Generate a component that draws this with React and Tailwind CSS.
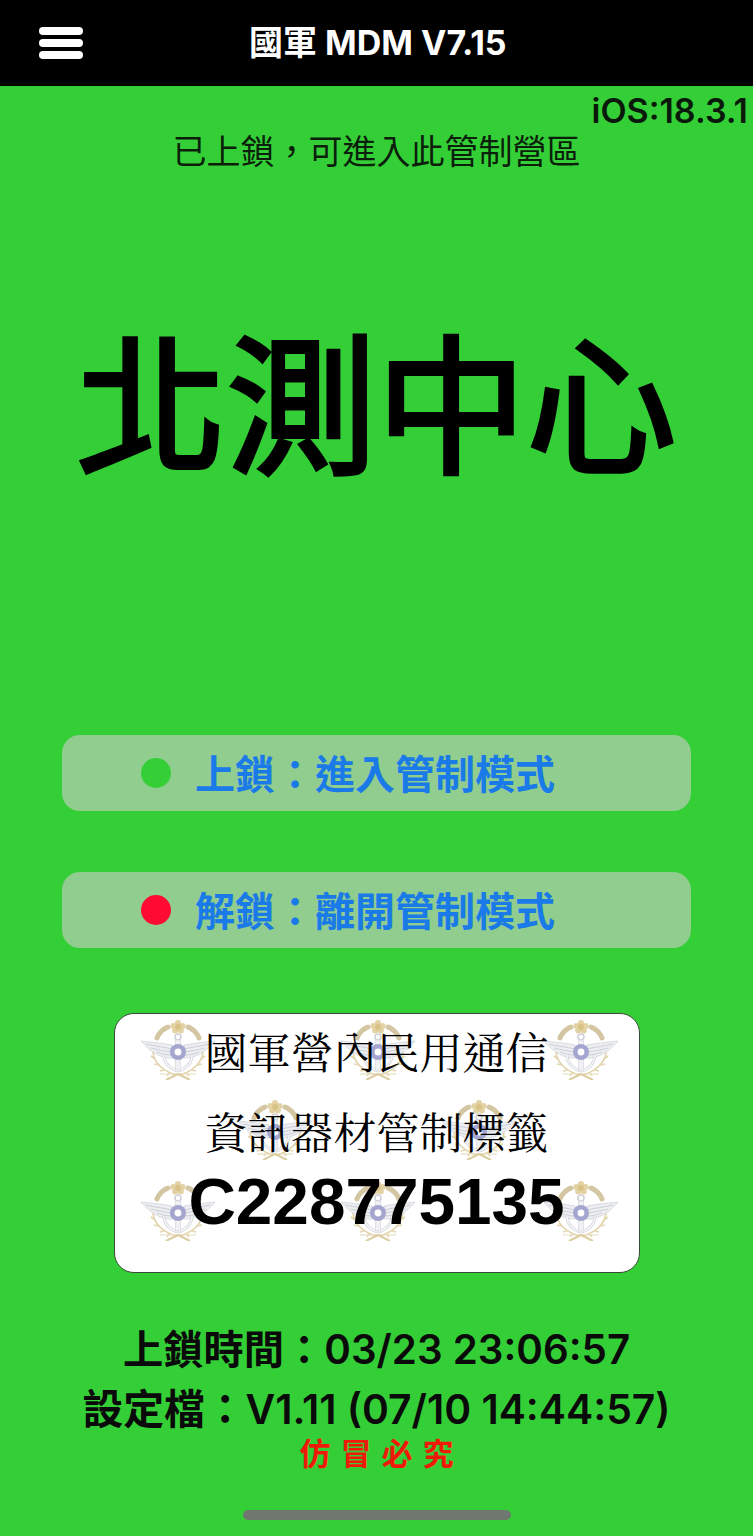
const CJK = "font-['Inter','Noto_Sans_CJK_TC',sans-serif]";

function EmblemHalf() {
  return (
    <g>
      {/* wheat at the top */}
      <path d="M17 19 C19 14 23 10 28 8" fill="none" stroke="#d4c6a2" strokeWidth="5" strokeLinecap="round" strokeDasharray="2 1" />
      {/* laurel */}
      <path d="M13 33 C14 44 24 53 37 56" fill="none" stroke="#e0d2a8" strokeWidth="1.6" />
      <path d="M15 40 L11 37 M19 46 L14 45 M24 51 L20 52 M29 54 L27 57" stroke="#e3d6b0" strokeWidth="1.6" />
      <path d="M20 55 H38" stroke="#e6dcc0" strokeWidth="1.2" />
      <path d="M26 61 L38 55" stroke="#dccd9e" strokeWidth="2" />
      {/* wing */}
      <path d="M1 22 C10 23 22 24 32 26 L32 39 C22 40 10 33 1 22Z" fill="#eceef1" stroke="#cdd0d6" strokeWidth="0.7" />
      <path d="M6 25 C14 27 24 28 32 30 M11 29 C18 31 25 32 32 33 M17 33 C22 35 27 36 32 36" fill="none" stroke="#c4c7ce" strokeWidth="0.8" />
      {/* anchor fluke */}
      <path d="M24 36 C24 44 30 50 38 52" fill="none" stroke="#d3d5db" strokeWidth="3" />
      <path d="M24 36 C24 44 30 50 38 52" fill="none" stroke="#f8f8fa" strokeWidth="1.4" />
    </g>
  );
}

function Emblem({ className }) {
  return (
    <svg viewBox="0 0 76 60" className={className}>
      <g transform="translate(0 -1)">
        <EmblemHalf />
        <g transform="matrix(-1 0 0 1 76 0)">
          <EmblemHalf />
        </g>
        {/* plum flower */}
        <circle cx="38" cy="4" r="3" fill="#e3d2a4" />
        <circle cx="33.4" cy="7" r="3" fill="#e3d2a4" />
        <circle cx="42.6" cy="7" r="3" fill="#e3d2a4" />
        <circle cx="35.2" cy="11.5" r="3" fill="#e3d2a4" />
        <circle cx="40.8" cy="11.5" r="3" fill="#e3d2a4" />
        <circle cx="38" cy="8" r="3" fill="#d9c286" />
        {/* anchor */}
        <circle cx="38" cy="18" r="3" fill="none" stroke="#cfd1d8" strokeWidth="1.6" />
        <rect x="35.5" y="21" width="5" height="30" fill="#f1f1f4" stroke="#d5d7dc" strokeWidth="0.7" />
        {/* center ring */}
        <circle cx="38" cy="33" r="8" fill="#a4a6cf" />
        <circle cx="38" cy="33" r="3.4" fill="#fff" />
      </g>
    </svg>
  );
}

function LockBtn({ dot, label }) {
  return (
    <button className="w-[629px] h-[76px] rounded-[18px] bg-[#91cd8e] flex items-center pl-[79px]">
      <span className={`w-[30px] h-[30px] rounded-full ${dot}`} />
      <span className={`ml-[24px] pt-[3px] text-[40px] leading-none font-bold text-[#1a7ae8] ${CJK}`}>{label}</span>
    </button>
  );
}

const serif = "relative text-[43px] leading-[50px] font-['Noto_Serif_CJK_TC','Noto_Sans_CJK_TC',serif] text-black";

export default function App() {
  return (
    <div className={`w-[753px] h-[1536px] bg-[#34cf37] flex flex-col items-center overflow-hidden relative ${CJK}`}>
      <header className="w-full h-[86px] bg-black flex items-center shrink-0">
        <div className="ml-[39px] w-[44px] flex flex-col gap-[4px]">
          <span className="h-[8px] rounded-full bg-white" />
          <span className="h-[8px] rounded-full bg-white" />
          <span className="h-[8px] rounded-full bg-white" />
        </div>
        <h1 className="ml-[166px] text-[34px] font-bold text-white leading-none whitespace-nowrap">國軍 MDM V7.15</h1>
      </header>

      <div className="w-full text-right pr-[5px] text-[34px] leading-[31px] font-semibold text-[#0a1a0a] mt-[9px] h-[31px] whitespace-nowrap">iOS:18.3.1</div>
      <p className="mt-[9px] text-[34px] leading-none text-[#0b1f0b]">已上鎖，可進入此管制營區</p>

      <h2 className="mt-[164px] text-[150px] leading-none font-normal text-black [-webkit-text-stroke:4px_black]">北測中心</h2>

      <div className="mt-[252px] flex flex-col gap-[61px]">
        <LockBtn dot="bg-[#34cf37]" label="上鎖：進入管制模式" />
        <LockBtn dot="bg-[#ff0a33]" label="解鎖：離開管制模式" />
      </div>

      <section className="mt-[65px] w-[526px] h-[260px] bg-white rounded-[20px] border border-[#3a4a3a] relative overflow-hidden flex flex-col items-center">
        <Emblem className="absolute left-[25px] top-[6px] w-[76px] h-[60px]" />
        <Emblem className="absolute left-[225px] top-[6px] w-[76px] h-[60px]" />
        <Emblem className="absolute left-[428px] top-[6px] w-[76px] h-[60px]" />
        <Emblem className="absolute left-[122px] top-[86px] w-[76px] h-[60px]" />
        <Emblem className="absolute left-[326px] top-[86px] w-[76px] h-[60px]" />
        <Emblem className="absolute left-[25px] top-[167px] w-[76px] h-[60px]" />
        <Emblem className="absolute left-[225px] top-[167px] w-[76px] h-[60px]" />
        <Emblem className="absolute left-[428px] top-[167px] w-[76px] h-[60px]" />
        <p className={`${serif} mt-[12px]`}>國軍營內民用通信</p>
        <p className={`${serif} mt-[30px]`}>資訊器材管制標籤</p>
        <p className="relative mt-[11px] text-[65.7px] leading-[70px] font-bold text-black font-['Liberation_Sans',sans-serif]">C228775135</p>
      </section>

      <p className="mt-[54px] text-[40.3px] leading-[46px] font-semibold text-[#0a0a0a] whitespace-nowrap">上鎖時間：03/23 23:06:57</p>
      <p className="mt-[13px] text-[40.8px] leading-[46px] font-semibold text-[#0a0a0a] whitespace-nowrap">設定檔：V1.11 (07/10 14:44:57)</p>
      <p className="mt-[4px] ml-[10px] text-[31px] leading-[36px] font-bold text-[#f01a0a] tracking-[10px]">仿冒必究</p>

      <div className="absolute left-[243px] bottom-[16px] w-[268px] h-[10px] rounded-full bg-[#6f776f]" />
    </div>
  );
}
